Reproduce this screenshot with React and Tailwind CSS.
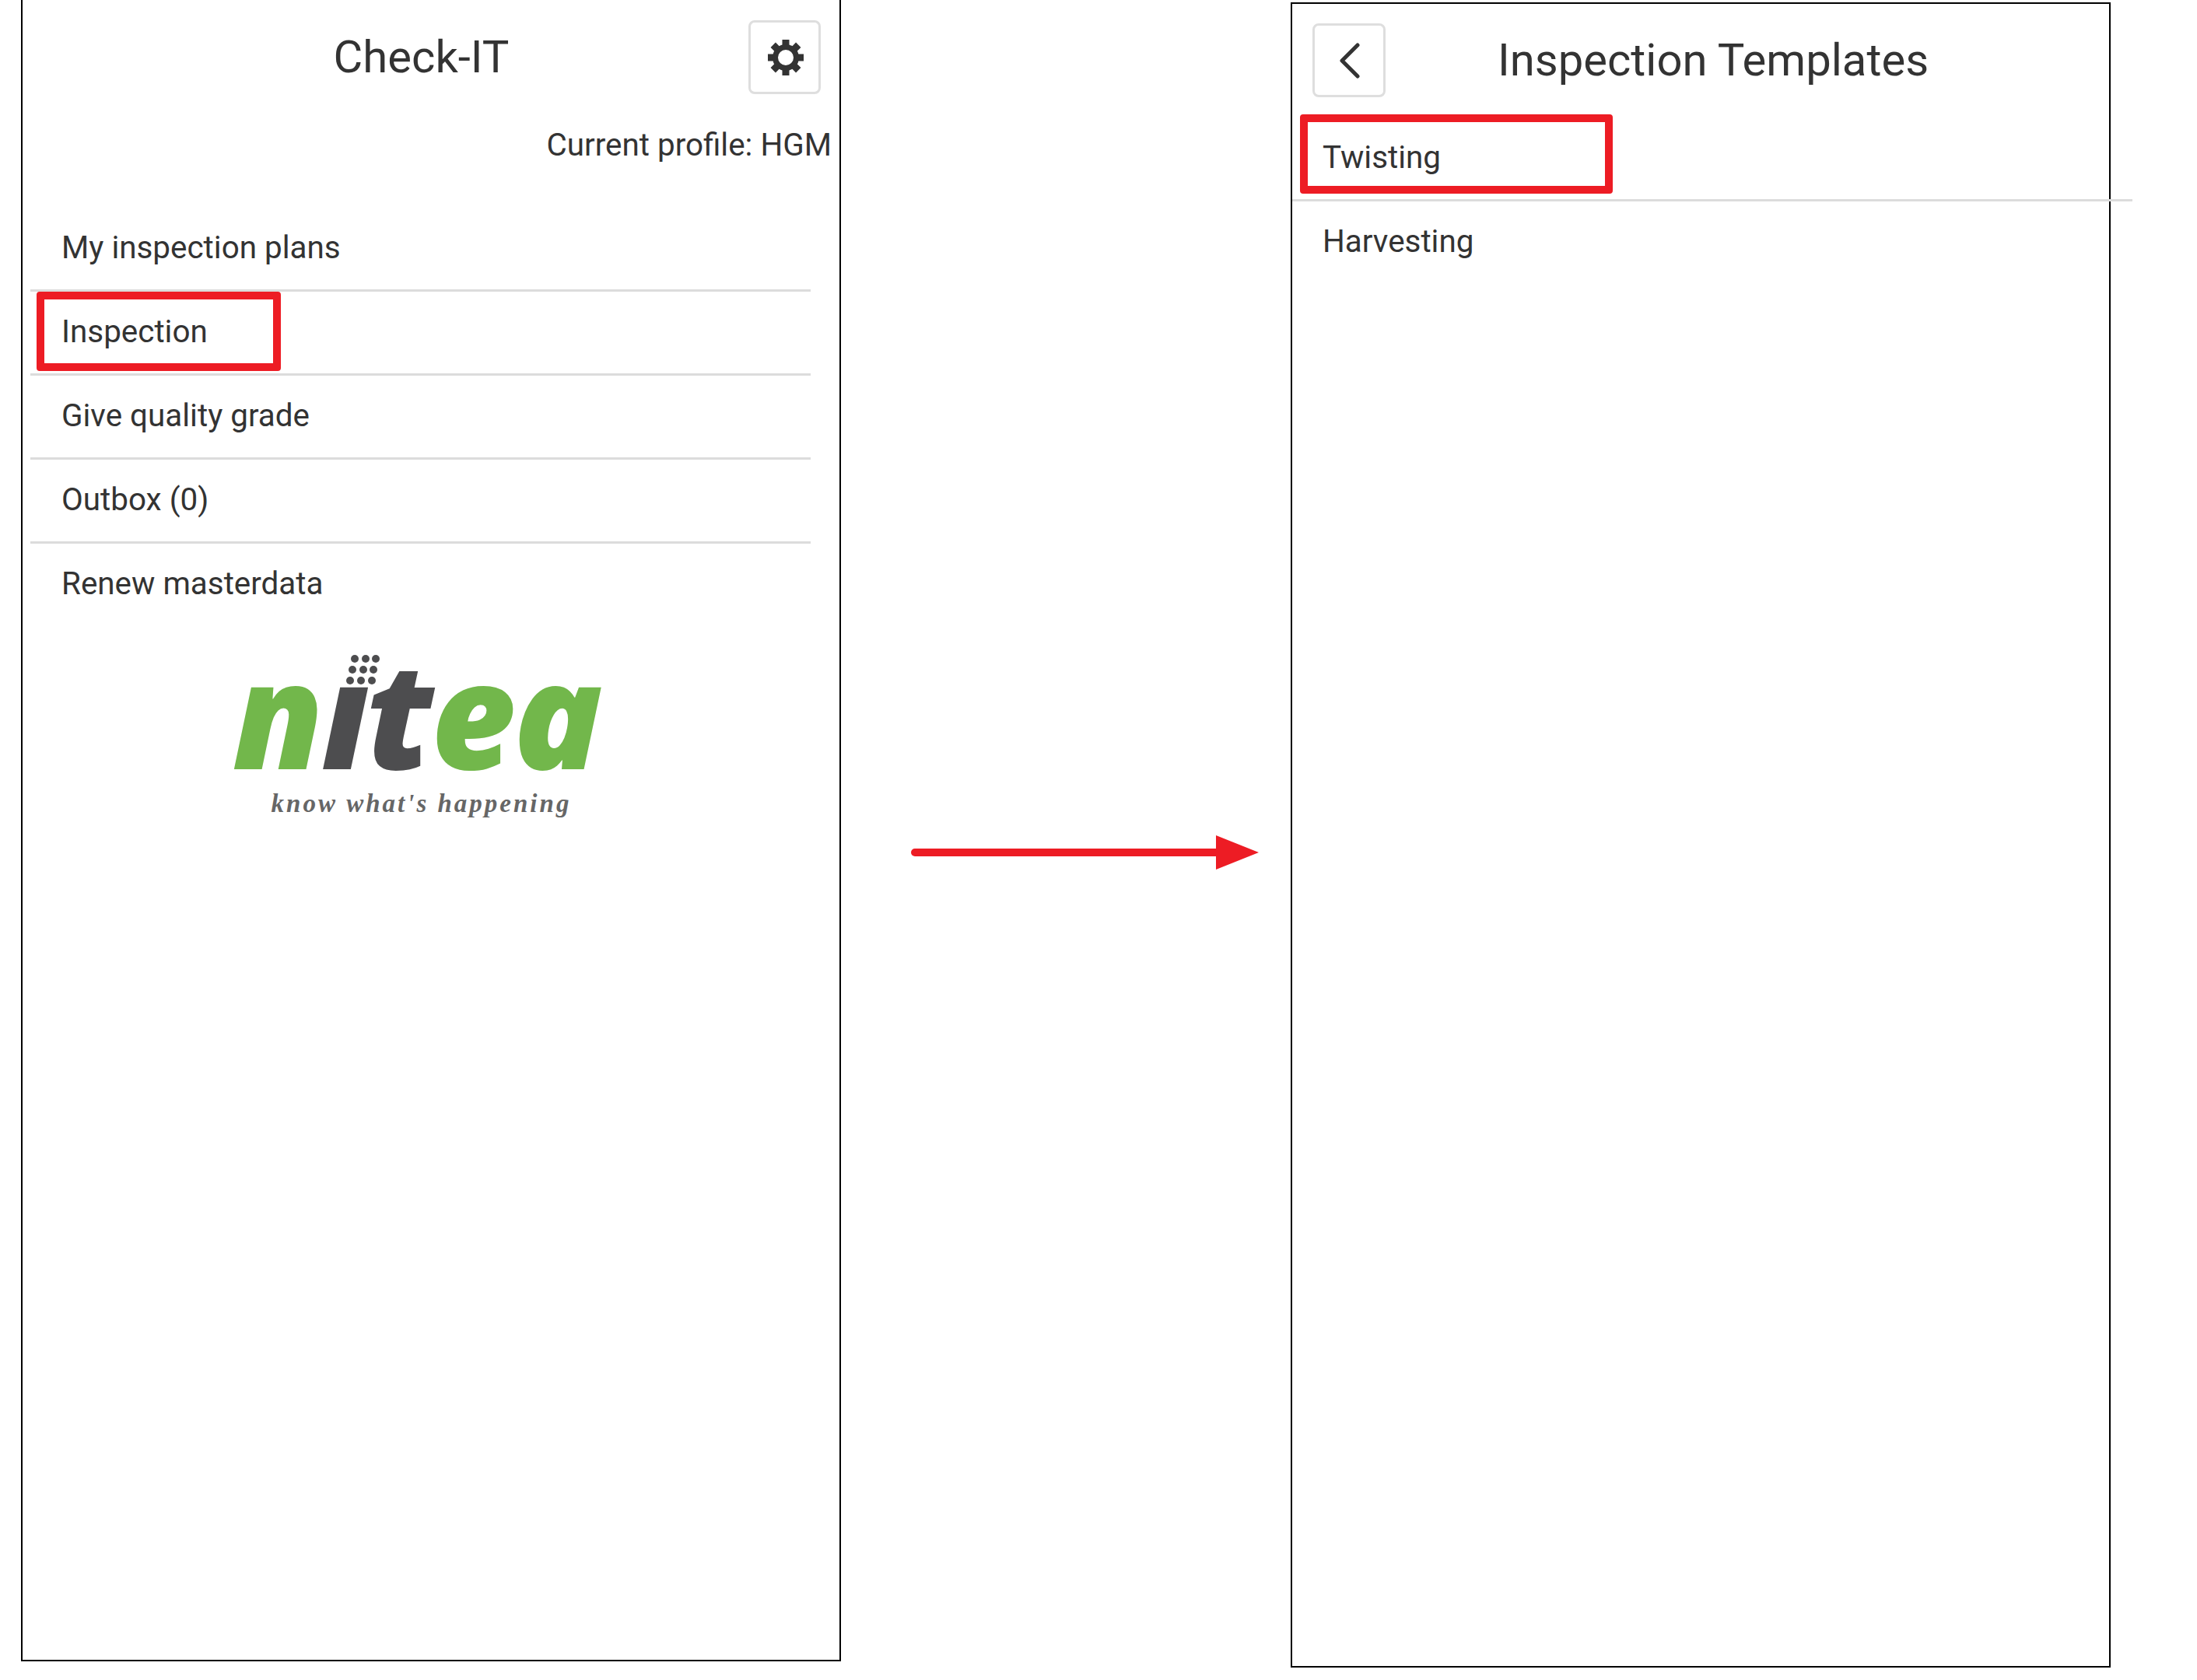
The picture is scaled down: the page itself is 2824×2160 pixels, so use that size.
import React from 'react';

const rows = ['My inspection plans', 'Inspection', 'Give quality grade', 'Outbox (0)', 'Renew masterdata'];

function Gear() {
  const angles = [0, 45, 90, 135, 180, 225, 270, 315];
  return (
    <svg width="46" height="46" viewBox="0 0 46 46" fill="#333333">
      {angles.map((a) => (
        <rect key={a} x="18.5" y="0" width="9" height="10" transform={`rotate(${a} 23 23)`} />
      ))}
      <circle cx="23" cy="23" r="13.5" fill="none" stroke="#333333" strokeWidth="7" />
    </svg>
  );
}

function NiteaLogo() {
  // dots over the i, slanted like the wordmark
  const dots = [
    [161, 16], [175, 16], [188, 16],
    [158, 30], [172, 30], [185, 30],
    [155, 44], [169, 44], [183, 44],
  ];
  return (
    <div className="relative flex flex-col items-center w-[480px] ml-[266px] mt-[24px]">
      <div className="flex items-baseline h-[170px] font-['Open_Sans',sans-serif] font-extrabold italic text-[189px] leading-[170px] tracking-[-3.4px] whitespace-nowrap">
        <span className="text-[#72b74b]">n</span>
        <span className="text-[#4d4d4f]">ıt</span>
        <span className="text-[#72b74b]">ea</span>
      </div>
      <svg className="absolute left-[0px] top-[0px]" width="240" height="60" viewBox="0 0 240 60" fill="#4d4d4f">
        {dots.map(([x, y]) => (
          <circle key={`${x}-${y}`} cx={x} cy={y} r="5" />
        ))}
      </svg>
      <div className="mt-[14px] ml-[13px] font-['Liberation_Serif',serif] font-bold italic text-[33px] leading-[36px] tracking-[3px] text-[#666666] whitespace-nowrap">
        know what's happening
      </div>
    </div>
  );
}

export default function App() {
  return (
    <div className="flex items-start w-[2824px] h-[2160px] bg-white font-['Roboto',sans-serif] text-[#333333] overflow-hidden">
      {/* left screen */}
      <div className="relative shrink-0 ml-[27px] w-[1054px] h-[2136px] border-x-2 border-b-2 border-black">
        <div className="flex items-start pt-[26px]">
          <h1 className="w-[933px] pl-[92px] text-center text-[58px] leading-[94px] font-normal">Check-IT</h1>
          <button className="flex items-center justify-center w-[93px] h-[95px] pl-[2px] border-[3px] border-[#dedede] rounded-[8px]">
            <Gear />
          </button>
        </div>
        <div className="mt-[42px] pr-[10px] text-right text-[40.4px] leading-[48px]">Current profile: HGM</div>
        <div className="ml-[10px] mt-[56px] w-[1003px]">
          {rows.map((label, i) => (
            <div
              key={label}
              className={`flex items-center h-[108px] pl-[40px] text-[40.4px] ${i < rows.length - 1 ? 'border-b-[3px] border-[#dcdcdc]' : 'pb-[3px]'}`}
            >
              {label}
            </div>
          ))}
        </div>
        <NiteaLogo />
        {/* highlight */}
        <div className="absolute left-[18px] top-[375px] w-[314px] h-[102px] border-[10px] border-[#ed1c24] rounded-[4px]" />
      </div>

      {/* arrow between screens */}
      <svg className="shrink-0 ml-[89px] mt-[1074px]" width="449" height="44" viewBox="0 0 449 44">
        <line x1="6" y1="22" x2="393" y2="22" stroke="#ed1c24" strokeWidth="10" strokeLinecap="round" />
        <polygon points="393,0 448,22 393,44" fill="#ed1c24" />
      </svg>

      {/* right screen */}
      <div className="relative shrink-0 ml-[40px] mt-[3px] w-[1054px] h-[2141px] border-x-2 border-y-2 border-black">
        <div className="flex items-start pt-[25px] pl-[26px]">
          <button className="flex items-center justify-center w-[94px] h-[95px] pl-[2px] border-[3px] border-[#dedede] rounded-[8px]">
            <svg width="30" height="46" viewBox="0 0 30 46" fill="none" stroke="#333333" strokeWidth="5" strokeLinecap="round" strokeLinejoin="round">
              <polyline points="25,3 5,23 25,43" />
            </svg>
          </button>
          <h1 className="w-[842px] text-center text-[58px] leading-[94px] font-normal">Inspection Templates</h1>
        </div>
        <div className="mt-[26px] w-[1080px]">
          {['Twisting', 'Harvesting'].map((label, i) => (
            <div
              key={label}
              className={`flex items-center h-[108px] pl-[39px] text-[40.4px] ${i === 0 ? 'border-b-[3px] border-[#dcdcdc]' : 'pb-[3px]'}`}
            >
              {label}
            </div>
          ))}
        </div>
        {/* highlight */}
        <div className="absolute left-[10px] top-[142px] w-[402px] h-[102px] border-[10px] border-[#ed1c24] rounded-[4px]" />
      </div>
    </div>
  );
}
